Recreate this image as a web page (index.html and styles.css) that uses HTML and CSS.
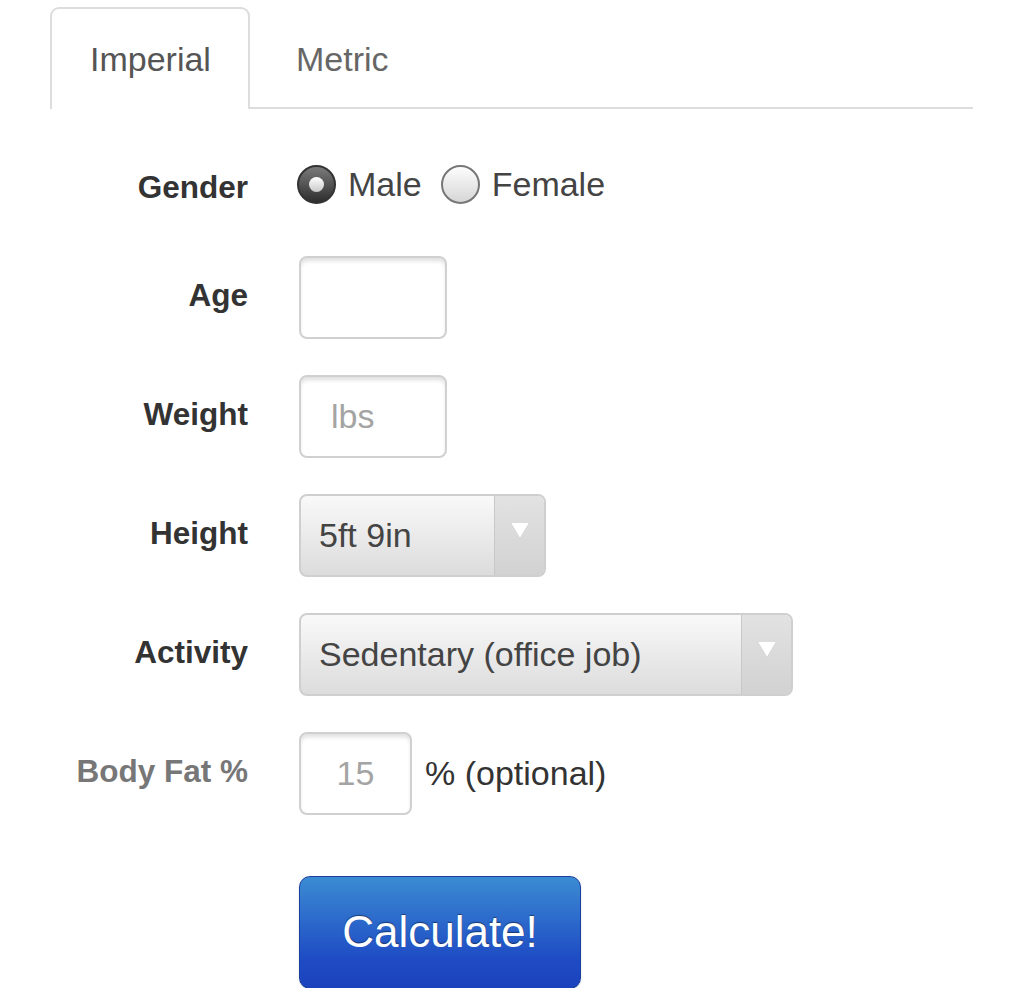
FILE: index.html
```html
<!DOCTYPE html>
<html>
<head>
<meta charset="utf-8">
<link rel="stylesheet" href="styles.css">
</head>
<body>
<div class="tabs">
  <div class="tab active">Imperial</div>
  <div class="tab">Metric</div>
</div>
<form class="form">
  <div class="row gender-row">
    <div class="label">Gender</div>
    <div class="controls">
      <span class="radio checked"></span><span class="radio-text">Male</span>
      <span class="radio"></span><span class="radio-text">Female</span>
    </div>
  </div>
  <div class="row">
    <div class="label">Age</div>
    <div class="controls"><input class="field w147" type="text"></div>
  </div>
  <div class="row">
    <div class="label">Weight</div>
    <div class="controls"><input class="field w147 pad-lbs" type="text" placeholder="lbs"></div>
  </div>
  <div class="row">
    <div class="label">Height</div>
    <div class="controls">
      <div class="select w246"><span class="select-text">5ft 9in</span><span class="select-arrow"><span class="tri"></span></span></div>
    </div>
  </div>
  <div class="row">
    <div class="label">Activity</div>
    <div class="controls">
      <div class="select w493"><span class="select-text">Sedentary (office job)</span><span class="select-arrow"><span class="tri"></span></span></div>
    </div>
  </div>
  <div class="row">
    <div class="label muted">Body Fat %</div>
    <div class="controls">
      <input class="field w112 center" type="text" placeholder="15"><span class="suffix">% (optional)</span>
    </div>
  </div>
  <div class="row button-row">
    <div class="label"></div>
    <div class="controls"><button type="button" class="btn">Calculate!</button></div>
  </div>
</form>
</body>
</html>
```
FILE: styles.css
```css
html, body {
  margin: 0;
  padding: 0;
  background: #fff;
  font-family: "Liberation Sans", Arial, sans-serif;
  color: #444;
}
.tabs {
  display: flex;
  margin: 0 51px 0 50px;
  padding-top: 7px;
  border-bottom: 2px solid #ddd;
}
.tab {
  box-sizing: border-box;
  height: 102px;
  padding: 0 38px;
  line-height: 100px;
  font-size: 34px;
  color: #666;
  border: 2px solid transparent;
  border-bottom: none;
  border-radius: 9px 9px 0 0;
  margin-bottom: -2px;
}
.tab.active {
  width: 200px;
  border-color: #ddd;
  background: #fff;
  color: #555;
}
.tab + .tab { margin-left: 6px; }

.form {
  padding-top: 34px;
}
.row {
  display: flex;
  align-items: center;
  height: 82px;
  margin-bottom: 37px;
}
.gender-row { margin-bottom: 31px; }
.button-row { height: 112px; margin-top: 62px; margin-bottom: 0; }
.label {
  width: 248px;
  flex: none;
  text-align: right;
  margin-right: 51px;
  font-weight: bold;
  font-size: 31.5px;
  color: #333;
  position: relative;
  top: -2px;
}
.gender-row .label { top: 3px; }
.label.muted { color: #777; }
.controls {
  display: flex;
  align-items: center;
  font-size: 34px;
}
.radio {
  box-sizing: border-box;
  width: 39px;
  height: 39px;
  border-radius: 50%;
  border: 2px solid #777;
  background: linear-gradient(#fdfdfd, #d6d6d6);
  display: inline-flex;
  align-items: center;
  justify-content: center;
}
.radio.checked {
  margin-left: -2px;
  border: 2px solid #333;
  background: linear-gradient(#7a7a7a, #2e2e2e);
}
.radio.checked::after {
  content: "";
  width: 15px;
  height: 15px;
  border-radius: 50%;
  background: linear-gradient(#fff, #c8c8c8);
}
.radio-text {
  margin-left: 12px;
  margin-right: 19px;
  color: #444;
}
.field {
  box-sizing: border-box;
  height: 83px;
  border: 2px solid #d0d0d0;
  border-radius: 8px;
  box-shadow: inset 0 4px 4px -1px rgba(0,0,0,0.13);
  background: #fff;
  font-family: "Liberation Sans", Arial, sans-serif;
  font-size: 34px;
  color: #444;
  padding: 0 14px;
  outline: none;
  -webkit-appearance: none;
  appearance: none;
}
.field::placeholder { color: #a4a4a4; }
.pad-lbs { padding-left: 30px; }
.center { text-align: center; padding: 0; }
.w147 { width: 148px; }
.w112 { width: 113px; }
.suffix { margin-left: 13px; color: #333; }

.select {
  box-sizing: border-box;
  height: 83px;
  display: flex;
  align-items: stretch;
  border: 2px solid #cfcfcf;
  border-radius: 8px;
  background: linear-gradient(#f9f9f9, #dcdcdc);
  overflow: hidden;
}
.w246 { width: 247px; }
.w493 { width: 494px; }
.select-text {
  flex: 1;
  display: flex;
  align-items: center;
  padding-left: 18px;
  color: #444;
}
.select-arrow {
  width: 50px;
  flex: none;
  border-left: 1px solid #c8c8c8;
  background: linear-gradient(#e2e2e2, #d2d2d2);
  display: flex;
  justify-content: center;
  padding-top: 27px;
  box-sizing: border-box;
}
.tri {
  width: 0;
  height: 0;
  border-left: 9px solid transparent;
  border-right: 9px solid transparent;
  border-top: 15px solid #fff;
  filter: drop-shadow(0 0 0.5px #999);
}
.btn {
  box-sizing: border-box;
  width: 282px;
  height: 113px;
  border: 1px solid #1b3f9e;
  border-radius: 11px;
  background: linear-gradient(#3b8bd3, #1e4bc4 75%, #1b42bd);
  color: #fff;
  font-family: "Liberation Sans", Arial, sans-serif;
  font-size: 44px;
  text-shadow: 0 -1px 1px rgba(0,0,0,0.45);
  box-shadow: 0 1px 2px rgba(0,0,0,0.15);
  padding: 0;
  cursor: pointer;
}
```
